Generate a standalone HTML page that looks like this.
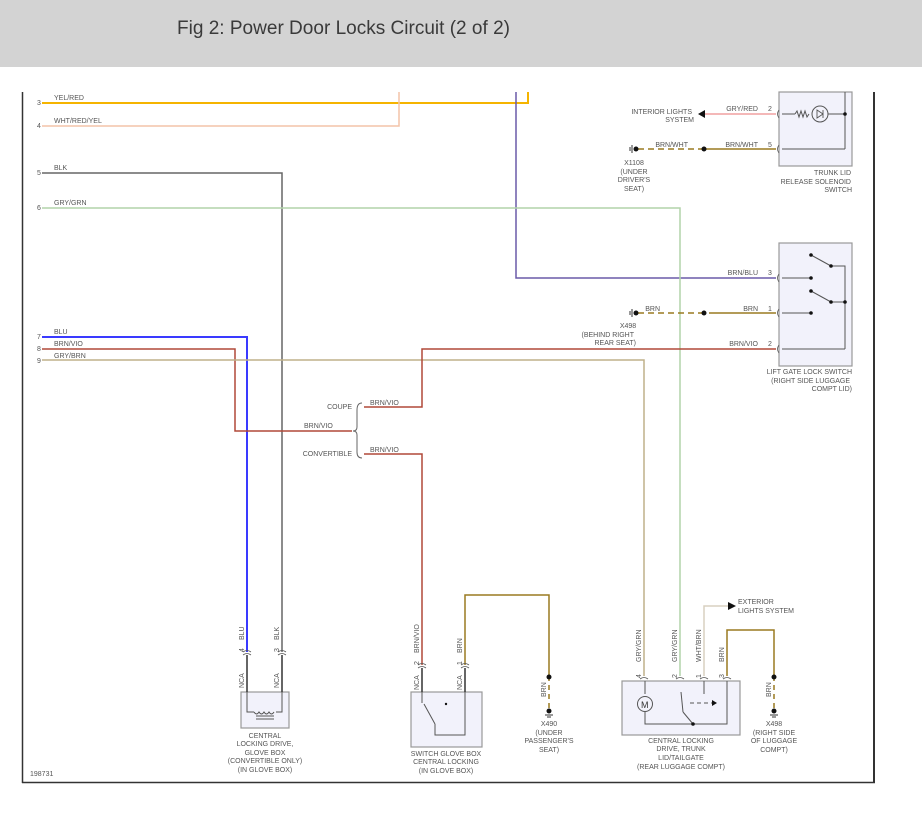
<!DOCTYPE html>
<html><head><meta charset="utf-8"><style>
html,body{margin:0;padding:0;background:#fff;width:922px;height:826px;overflow:hidden}
svg text{font-family:"Liberation Sans",sans-serif;fill:#555}
</style></head><body>
<svg width="922" height="826" viewBox="0 0 922 826" xmlns="http://www.w3.org/2000/svg">
<rect x="0" y="0" width="922" height="67" fill="#d3d3d3"/>
<text x="177" y="34" textLength="333" lengthAdjust="spacingAndGlyphs" style="font-size:19px;fill:#3a3a3a">Fig 2: Power Door Locks Circuit (2 of 2)</text>

<g stroke="#333" fill="none">
<line x1="22.5" y1="92" x2="22.5" y2="783" stroke-width="1.5"/>
<line x1="22" y1="782.5" x2="875" y2="782.5" stroke-width="1.5"/>
<line x1="874" y1="92" x2="874" y2="783" stroke-width="2"/>
</g>

<g fill="#f2f2fb" stroke="#999" stroke-width="1.2">
<rect x="779" y="92" width="73" height="74"/>
<rect x="779" y="243" width="73" height="123"/>
<rect x="622" y="681" width="118" height="54"/>
<rect x="411" y="692" width="71" height="55"/>
<rect x="241" y="692" width="48" height="36"/>
</g>

<g fill="none" stroke-width="1.5">
<polyline points="42,103 528,103 528,92" stroke="#f5b400" stroke-width="2"/>
<polyline points="42,126 399,126 399,92" stroke="#f3c4a8"/>
<polyline points="516,92 516,278 776,278" stroke="#6a5aa8"/>
<polyline points="42,173 282,173 282,652" stroke="#666"/>
<polyline points="42,208 680,208 680,676" stroke="#b2d4aa"/>
<polyline points="42,337 247,337 247,652" stroke="#3a3aff" stroke-width="2"/>
<polyline points="42,349 235,349 235,431 352,431" stroke="#b04838"/>
<polyline points="42,360 644,360 644,676" stroke="#bfb08a"/>
<polyline points="364,407 422,407 422,349 776,349" stroke="#b04838"/>
<polyline points="364,454 422,454 422,665" stroke="#b04838"/>
<polyline points="465,665 465,595 549,595 549,676" stroke="#9a7a20"/>
<polyline points="704,676 704,606 728,606" stroke="#d8d0c0"/>
<polyline points="727,676 727,630 774,630 774,676" stroke="#9a7a20"/>
<line x1="705" y1="114" x2="776" y2="114" stroke="#f0a0a0"/>
<line x1="704" y1="149" x2="776" y2="149" stroke="#9a7a20"/>
<line x1="704" y1="149" x2="636" y2="149" stroke="#9a7a20" stroke-dasharray="6,4"/>
<line x1="709" y1="313" x2="776" y2="313" stroke="#9a7a20"/>
<line x1="704" y1="313" x2="636" y2="313" stroke="#9a7a20" stroke-dasharray="6,4"/>
<line x1="549" y1="676" x2="549" y2="712" stroke="#9a7a20" stroke-dasharray="5,4"/>
<line x1="774" y1="676" x2="774" y2="712" stroke="#9a7a20" stroke-dasharray="5,4"/>
<g stroke="#333">
<line x1="247" y1="655" x2="247" y2="692"/><line x1="282" y1="655" x2="282" y2="692"/>
<line x1="422" y1="668" x2="422" y2="692"/><line x1="465" y1="668" x2="465" y2="692"/>
</g>
</g>
<!-- connector marks -->
<g fill="none" stroke="#555" stroke-width="0.8">
<path d="M779,110 q-3,4 0,8"/><path d="M779,145 q-3,4 0,8"/>
<path d="M779,274 q-3,4 0,8"/><path d="M779,309 q-3,4 0,8"/><path d="M779,345 q-3,4 0,8"/>
<path d="M243,652 q4,-3 8,0"/><path d="M243,655 q4,-3 8,0"/>
<path d="M278,652 q4,-3 8,0"/><path d="M278,655 q4,-3 8,0"/>
<path d="M418,665 q4,-3 8,0"/><path d="M418,668 q4,-3 8,0"/>
<path d="M461,665 q4,-3 8,0"/><path d="M461,668 q4,-3 8,0"/>
<path d="M640,679 q4,-3 8,0"/><path d="M676,679 q4,-3 8,0"/><path d="M700,679 q4,-3 8,0"/><path d="M723,679 q4,-3 8,0"/>
</g>
<path d="M362,403 Q357,403 357,410 L357,427 Q357,431 353,431 Q357,431 357,435 L357,452 Q357,458 362,458" fill="none" stroke="#666" stroke-width="1"/>

<g fill="#111">
<circle cx="704" cy="149" r="2.5"/><circle cx="636" cy="149" r="2.5"/>
<circle cx="704" cy="313" r="2.5"/><circle cx="636" cy="313" r="2.5"/>
<circle cx="549" cy="677" r="2.5"/><circle cx="549" cy="711" r="2.5"/>
<circle cx="774" cy="677" r="2.5"/><circle cx="774" cy="711" r="2.5"/>
</g>
<g stroke="#333" stroke-width="1">
<line x1="632" y1="145" x2="632" y2="153"/><line x1="630" y1="147" x2="630" y2="151"/>
<line x1="632" y1="309" x2="632" y2="317"/><line x1="630" y1="311" x2="630" y2="315"/>
<line x1="545" y1="715" x2="553" y2="715"/><line x1="547" y1="717" x2="551" y2="717"/>
<line x1="770" y1="715" x2="778" y2="715"/><line x1="772" y1="717" x2="776" y2="717"/>
</g>
<polygon points="698,114 705,110 705,118" fill="#111"/>
<polygon points="736,606 728,602 728,610" fill="#111"/>

<g fill="none" stroke="#555" stroke-width="1">
<line x1="782" y1="114" x2="795" y2="114"/>
<path d="M795,114 l2,-3 l2,6 l2,-6 l2,6 l2,-6 l2,6 l2,-3"/>
<circle cx="820" cy="114" r="8"/>
<path d="M817,110 l6,4 l-6,4 z M823,110 v8" stroke-width="0.9"/>
<line x1="828" y1="114" x2="845" y2="114"/>
<line x1="845" y1="92" x2="845" y2="149"/>
<line x1="782" y1="149" x2="845" y2="149"/>
<line x1="782" y1="278" x2="811" y2="278"/>
<line x1="782" y1="313" x2="811" y2="313"/>
<line x1="782" y1="349" x2="845" y2="349"/>
<line x1="811" y1="255" x2="831" y2="266"/>
<line x1="811" y1="291" x2="831" y2="302"/>
<polyline points="831,266 845,266 845,349"/>
<line x1="831" y1="302" x2="845" y2="302"/>
<polyline points="247,692 247,712 254,712"/><polyline points="282,692 282,712 276,712"/>
<path d="M254,712 q2.5,4 5,0 q2.5,4 5,0 q2.5,4 5,0 q2.5,4 5,0"/>
<line x1="256" y1="716" x2="274" y2="716"/><line x1="256" y1="719" x2="274" y2="719"/>
<polyline points="465,692 465,735 435,735 435,724"/>
<line x1="422" y1="692" x2="422" y2="703"/>
<line x1="424" y1="704" x2="435" y2="724"/>
<line x1="645" y1="681" x2="645" y2="694"/>
<circle cx="645" cy="704" r="7.5"/>
<polyline points="645,712 645,724 727,724 727,681"/>
<line x1="683" y1="712" x2="693" y2="724"/>
<line x1="683" y1="712" x2="681" y2="692"/>
<line x1="704" y1="681" x2="704" y2="694"/>
<line x1="690" y1="703" x2="712" y2="703" stroke-dasharray="4,3"/>
</g>
<polygon points="712,700 717,703 712,706" fill="#111"/>
<text x="641" y="708" style="font-size:9px;fill:#333">M</text>
<g fill="#111">
<circle cx="845" cy="114" r="1.8"/><circle cx="811" cy="255" r="1.8"/><circle cx="831" cy="266" r="1.8"/>
<circle cx="811" cy="278" r="1.8"/><circle cx="811" cy="291" r="1.8"/><circle cx="831" cy="302" r="1.8"/>
<circle cx="845" cy="302" r="1.8"/><circle cx="811" cy="313" r="1.8"/><circle cx="693" cy="724" r="1.8"/>
<circle cx="446" cy="704" r="1.2"/>
</g>

<g style="font-size:7px">
<text x="37" y="105">3</text><text x="54" y="100">YEL/RED</text>
<text x="37" y="128">4</text><text x="54" y="123">WHT/RED/YEL</text>
<text x="37" y="175">5</text><text x="54" y="170">BLK</text>
<text x="37" y="210">6</text><text x="54" y="205">GRY/GRN</text>
<text x="37" y="339">7</text><text x="54" y="334">BLU</text>
<text x="37" y="351">8</text><text x="54" y="346">BRN/VIO</text>
<text x="37" y="363">9</text><text x="54" y="358">GRY/BRN</text>
<text x="352" y="409" text-anchor="end">COUPE</text>
<text x="352" y="456" text-anchor="end">CONVERTIBLE</text>
<text x="304" y="428">BRN/VIO</text>
<text x="370" y="405">BRN/VIO</text>
<text x="370" y="452">BRN/VIO</text>
<text x="692" y="114" text-anchor="end">INTERIOR LIGHTS</text>
<text x="694" y="122" text-anchor="end">SYSTEM</text>
<text x="758" y="111" text-anchor="end">GRY/RED</text><text x="768" y="111">2</text>
<text x="758" y="147" text-anchor="end">BRN/WHT</text><text x="768" y="147">5</text>
<text x="688" y="147" text-anchor="end">BRN/WHT</text>
<text x="634" y="165" text-anchor="middle">X1108</text>
<text x="634" y="174" text-anchor="middle">(UNDER</text>
<text x="634" y="182" text-anchor="middle">DRIVER'S</text>
<text x="634" y="191" text-anchor="middle">SEAT)</text>
<text x="851" y="175" text-anchor="end">TRUNK LID</text>
<text x="851" y="184" text-anchor="end">RELEASE SOLENOID</text>
<text x="852" y="192" text-anchor="end">SWITCH</text>
<text x="758" y="275" text-anchor="end">BRN/BLU</text><text x="768" y="275">3</text>
<text x="758" y="311" text-anchor="end">BRN</text><text x="768" y="311">1</text>
<text x="660" y="311" text-anchor="end">BRN</text>
<text x="628" y="328" text-anchor="middle">X498</text>
<text x="634" y="337" text-anchor="end">(BEHIND RIGHT</text>
<text x="636" y="345" text-anchor="end">REAR SEAT)</text>
<text x="758" y="346" text-anchor="end">BRN/VIO</text><text x="768" y="346">2</text>
<text x="852" y="374" text-anchor="end">LIFT GATE LOCK SWITCH</text>
<text x="850" y="383" text-anchor="end">(RIGHT SIDE LUGGAGE</text>
<text x="852" y="391" text-anchor="end">COMPT LID)</text>
<text x="738" y="604">EXTERIOR</text>
<text x="738" y="613">LIGHTS SYSTEM</text>
<text x="265" y="738" text-anchor="middle">CENTRAL</text>
<text x="265" y="746" text-anchor="middle">LOCKING DRIVE,</text>
<text x="265" y="755" text-anchor="middle">GLOVE BOX</text>
<text x="265" y="763" text-anchor="middle">(CONVERTIBLE ONLY)</text>
<text x="265" y="772" text-anchor="middle">(IN GLOVE BOX)</text>
<text x="446" y="756" text-anchor="middle">SWITCH GLOVE BOX</text>
<text x="446" y="764" text-anchor="middle">CENTRAL LOCKING</text>
<text x="446" y="773" text-anchor="middle">(IN GLOVE BOX)</text>
<text x="549" y="726" text-anchor="middle">X490</text>
<text x="549" y="735" text-anchor="middle">(UNDER</text>
<text x="549" y="743" text-anchor="middle">PASSENGER'S</text>
<text x="549" y="752" text-anchor="middle">SEAT)</text>
<text x="681" y="743" text-anchor="middle">CENTRAL LOCKING</text>
<text x="681" y="751" text-anchor="middle">DRIVE, TRUNK</text>
<text x="681" y="760" text-anchor="middle">LID/TAILGATE</text>
<text x="681" y="769" text-anchor="middle">(REAR LUGGAGE COMPT)</text>
<text x="774" y="726" text-anchor="middle">X498</text>
<text x="774" y="735" text-anchor="middle">(RIGHT SIDE</text>
<text x="774" y="743" text-anchor="middle">OF LUGGAGE</text>
<text x="774" y="752" text-anchor="middle">COMPT)</text>
<text x="30" y="776">198731</text>
</g>
<g style="font-size:7px">
<text transform="translate(244,652) rotate(-90)">4</text><text transform="translate(244,640) rotate(-90)">BLU</text>
<text transform="translate(279,652) rotate(-90)">3</text><text transform="translate(279,640) rotate(-90)">BLK</text>
<text transform="translate(244,688) rotate(-90)">NCA</text><text transform="translate(279,688) rotate(-90)">NCA</text>
<text transform="translate(419,665) rotate(-90)">2</text><text transform="translate(419,653) rotate(-90)">BRN/VIO</text>
<text transform="translate(462,665) rotate(-90)">1</text><text transform="translate(462,653) rotate(-90)">BRN</text>
<text transform="translate(419,690) rotate(-90)">NCA</text><text transform="translate(462,690) rotate(-90)">NCA</text>
<text transform="translate(546,697) rotate(-90)">BRN</text>
<text transform="translate(771,697) rotate(-90)">BRN</text>
<text transform="translate(641,678) rotate(-90)">4</text><text transform="translate(641,662) rotate(-90)">GRY/GRN</text>
<text transform="translate(677,678) rotate(-90)">2</text><text transform="translate(677,662) rotate(-90)">GRY/GRN</text>
<text transform="translate(701,678) rotate(-90)">1</text><text transform="translate(701,662) rotate(-90)">WHT/BRN</text>
<text transform="translate(724,678) rotate(-90)">3</text><text transform="translate(724,662) rotate(-90)">BRN</text>
</g>
</svg>
</body></html>
